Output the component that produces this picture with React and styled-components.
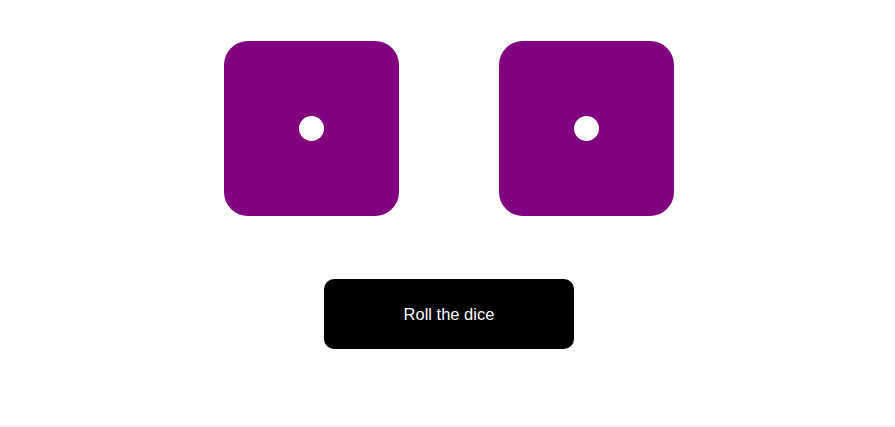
import React, { useState } from "react";
import styled, { createGlobalStyle } from "styled-components";

const GlobalStyle = createGlobalStyle`
  html, body {
    margin: 0;
    padding: 0;
    background: #ffffff;
    font-family: "Liberation Sans", Arial, sans-serif;
  }
`;

const Page = styled.div`
  width: 100%;
  height: 426px;
  box-sizing: border-box;

  display: flex;
  flex-direction: column;
  align-items: center;

  padding: 41px 0 0 3px;
  border-bottom: 1px solid #ededed;
`;

const DiceRow = styled.div`
  display: flex;
  gap: 100px;

  margin-bottom: 63px;
`;

const Die = styled.div`
  width: 175px;
  height: 175px;

  display: flex;
  justify-content: center;
  align-items: center;

  background: ${({ color }) => color};
  border-radius: 24px;
`;

const Pip = styled.span`
  width: 25px;
  height: 25px;

  background: #ffffff;
  border-radius: 50%;
`;

const RollButton = styled.button`
  width: 250px;
  height: 70px;

  background: #000000;
  color: #ffffff;
  border: none;
  border-radius: 10px;

  font-family: "Liberation Sans", Arial, sans-serif;
  font-size: 16.5px;
  cursor: pointer;
`;

const App = () => {
  const [dice] = useState([1, 1]);

  return (
    <>
      <GlobalStyle />
      <Page>
        <DiceRow>
          {dice.map((value, i) => (
            <Die key={i} color="#800080">
              <Pip />
            </Die>
          ))}
        </DiceRow>
        <RollButton type="button">Roll the dice</RollButton>
      </Page>
    </>
  );
};

export default App;
